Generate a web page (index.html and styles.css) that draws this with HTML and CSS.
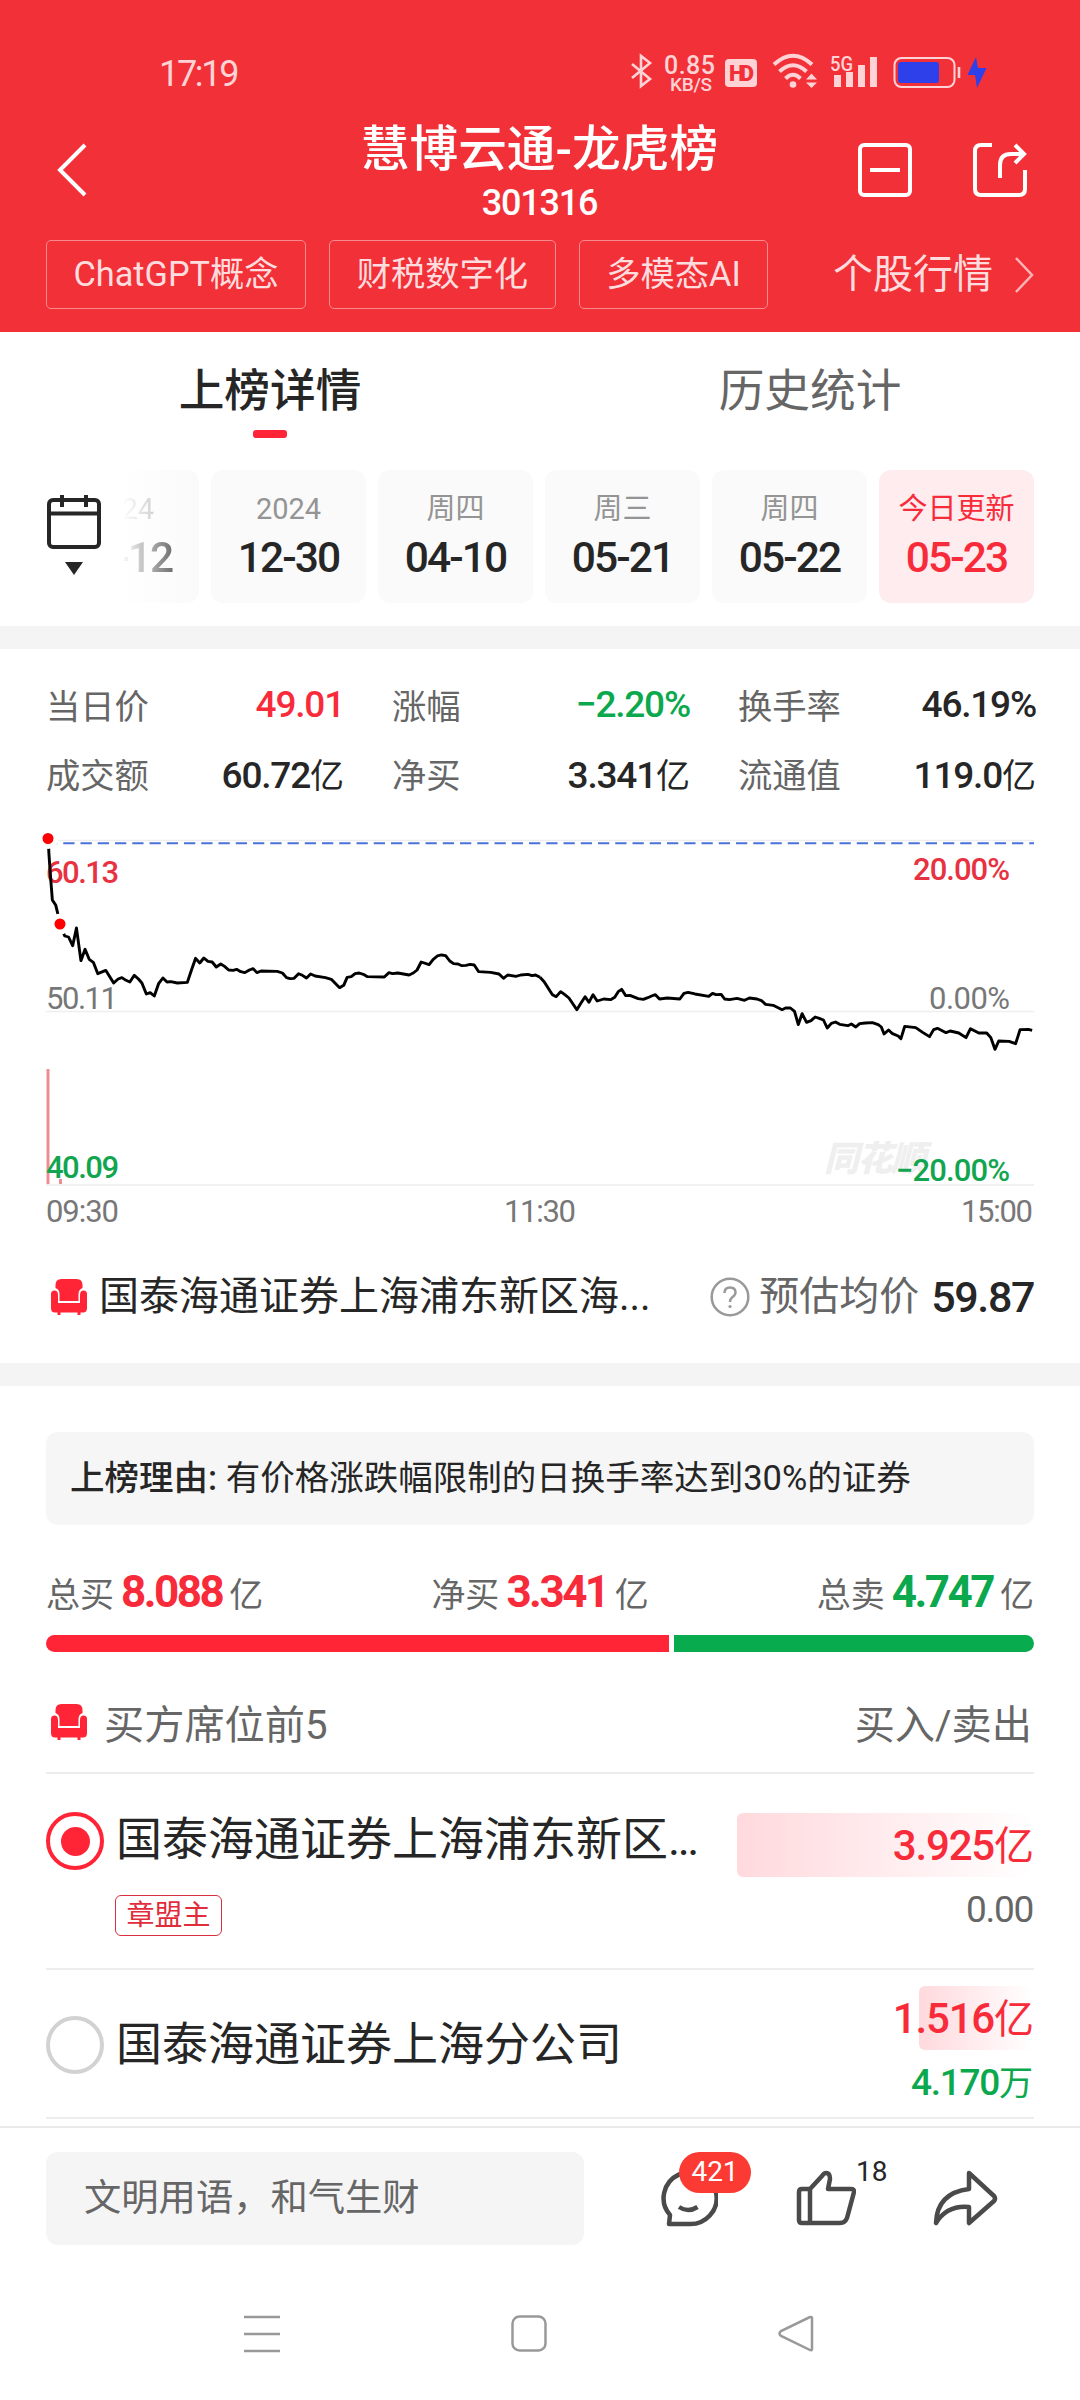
FILE: index.html
```
<!DOCTYPE html>
<html lang="zh-CN">
<head>
  <meta charset="UTF-8" />
  <meta name="viewport" content="width=device-width, initial-scale=1.0"/>
  <title>慧博云通-龙虎榜</title>
  <link rel="stylesheet" href="styles.css">
</head>
<body>
  <svg class="defs" width="0" height="0">
    <symbol id="sofa" viewBox="0 0 36 36">
      <path d="M4.500 9V6Q4.500 0 10.500 0H25.500Q31.500 0 31.500 6V9Q27.500 10.500 27.500 15V22H8.500V15Q8.500 10.500 4.500 9Z"/>
      <path d="M0 15Q0 11.500 3.500 11.500Q7 11.500 7 16V24H29V16Q29 11.500 32.500 11.500Q36 11.500 36 15V29Q36 33.500 32 33.500H29.500V36H26.500V33.500H9.500V36H6.500V33.500H4Q0 33.500 0 29Z"/>
    </symbol>
  </svg>

  <header class="header">
    <!-- 状态栏 -->
    <div class="status">
      <span class="clock">17:19</span>
      <div class="status-icons">
        <svg class="status-svg" width="360" height="46" viewBox="0 0 360 46">
          <g fill="none" stroke="#ffd3d5" stroke-width="2.600">
            <path d="M2 12L20 27L11 34V4L20 11L2 26"/>
            <rect x="264.500" y="6" width="60" height="29" rx="7" stroke-width="2"/>
            <path d="M329 15V26"/>
          </g>
          <g fill="#ffd3d5">
            <rect x="95" y="7" width="32" height="28" rx="4"/>
            <circle cx="163" cy="32.500" r="3.300"/>
            <path d="M176 27.500L181.500 21.500L187 27.500ZM176 30.500L181.500 36L187 30.500Z"/>
            <rect x="204" y="23" width="7" height="12"/>
            <rect x="216" y="20" width="7" height="15"/>
            <rect x="228" y="13" width="7" height="22"/>
            <rect x="240" y="5" width="7" height="30"/>
          </g>
          <g fill="none" stroke="#ffd3d5" stroke-width="4">
            <path d="M144 12.500Q163 -5 182 12.500"/>
            <path d="M149.500 19.500Q163 7 176.500 19.500"/>
            <path d="M155.500 26.500Q163 19 170.500 26.500"/>
          </g>
          <rect x="268" y="10" width="41" height="21" rx="3" fill="#2e40ea"/>
          <path d="M346 5L337.500 23H345L347 36L356.500 16H348Z" fill="#2e40ea"/>
          <text class="svg-speed" x="34" y="21.500" textLength="51">0.85</text>
          <text class="svg-unit" x="40" y="38.500" textLength="42">KB/S</text>
          <text class="svg-hd" x="99" y="28.500" textLength="25">HD</text>
          <text class="svg-5g" x="200" y="18.500" textLength="23" lengthAdjust="spacingAndGlyphs">5G</text>
        </svg>
      </div>
    </div>

    <!-- 标题 -->
    <div class="titlebar">
      <svg class="back" width="32" height="56" viewBox="0 0 32 56"><path d="M29 3L4 28L29 53"/></svg>
      <div class="title">
        <h1>慧博云通-龙虎榜</h1>
        <div class="code">301316</div>
      </div>
      <div class="title-actions">
        <svg width="54" height="54" viewBox="0 0 54 54"><rect x="2" y="2" width="50" height="50" rx="4"/><path d="M12 27H42"/></svg>
        <svg width="54" height="54" viewBox="0 0 54 54">
          <path d="M19 2H8Q2 2 2 8V46Q2 52 8 52H46Q52 52 52 46V27"/>
          <path d="M27 35V22Q27 11 38 11H50M42 2L51 11L42 20"/>
        </svg>
      </div>
    </div>

    <div class="tags">
      <span class="tag">ChatGPT概念</span>
      <span class="tag">财税数字化</span>
      <span class="tag">多模态AI</span>
      <a class="quote">个股行情<svg width="20" height="36" viewBox="0 0 20 36"><path d="M2 1L18 18L2 35"/></svg></a>
    </div>
  </header>

  <!-- 日期选择 -->
  <section class="days">
    <nav class="tabs">
      <div class="tab active">上榜详情</div>
      <div class="tab">历史统计</div>
    </nav>
    <div class="dates">
      <svg class="calendar" width="54" height="82" viewBox="0 0 54 82">
        <rect x="2" y="5" width="50" height="47" rx="4"/>
        <path d="M2 18.500H52M15 0V12M39 0V12"/>
        <path class="solid" d="M18 67H36L27 80Z"/>
      </svg>
      <div class="date-list">
        <div class="date cut"><span>2024</span><b>12-12</b></div>
        <div class="date"><span>2024</span><b>12-30</b></div>
        <div class="date"><span>周四</span><b>04-10</b></div>
        <div class="date"><span>周三</span><b>05-21</b></div>
        <div class="date"><span>周四</span><b>05-22</b></div>
        <div class="date today"><span>今日更新</span><b>05-23</b></div>
      </div>
    </div>
  </section>

  <!-- 行情数据 -->
  <section class="market">
    <div class="stats">
      <div class="stat"><span>当日价</span><b class="red">49.01</b></div>
      <div class="stat"><span>涨幅</span><b class="green">−2.20%</b></div>
      <div class="stat"><span>换手率</span><b>46.19%</b></div>
      <div class="stat"><span>成交额</span><b>60.72<i>亿</i></b></div>
      <div class="stat"><span>净买</span><b>3.341<i>亿</i></b></div>
      <div class="stat"><span>流通值</span><b>119.0<i>亿</i></b></div>
    </div>

    <svg class="chart" width="1080" height="430" viewBox="0 800 1080 430">
      <path class="grid" d="M46 840.500H1034M46 1011.500H1034M46 1185H1034"/>
      <text class="watermark" x="824" y="1171" textLength="102">同花顺</text>
      <path class="limit" d="M46 843.200H1034"/>
      <rect class="volume" x="46.500" y="1069" width="3" height="115"/>
      <rect class="volume" x="59" y="1179" width="3" height="5"/>
      <g class="axis">
        <text class="up" x="46" y="882.500" textLength="73">60.13</text>
        <text x="46" y="1008.500" textLength="72">50.11</text>
        <text class="down" x="46" y="1177.500" textLength="73">40.09</text>
        <text class="up" x="913" y="879.500" textLength="97">20.00%</text>
        <text x="929" y="1008.500" textLength="81">0.00%</text>
        <text class="down" x="896" y="1180.500" textLength="114">−20.00%</text>
        <text x="46" y="1221.500" textLength="73">09:30</text>
        <text x="504" y="1221.500" textLength="72">11:30</text>
        <text x="961" y="1221.500" textLength="72">15:00</text>
      </g>
      <!-- 分时线：上午 / 下午 -->
      <polyline class="price" transform="translate(0 800) scale(.34439 .33333)" points="140,116 142,160 146,220 152,300 162,316 169,346 175,372 184,398 188,408 199,411 211,437 222,384 235,482 247,448 259,478 271,487 284,521 307,511 330,549 343,537 354,533 366,541 377,546 390,526 402,537 412,549 425,582 436,578 448,588 461,550 473,534 485,546 496,545 515,549 544,547 555,513 568,475 580,489 592,474 604,484 616,486 628,501 641,492 652,499 664,510 677,511 687,508 699,515 711,518 724,510 735,506 746,518 758,513 805,514 820,519 832,533 842,536 854,535 867,521 878,526 890,534 902,522 915,528 945,533 962,538 986,563 998,556 1008,532 1020,530 1031,521 1043,519 1055,523 1067,530 1116,531 1129,518 1140,521 1155,519 1188,525 1200,519 1211,510 1223,486 1246,494 1258,478 1270,468 1282,465 1294,467 1306,483 1317,491 1330,492 1341,497 1353,496 1365,493 1377,495 1390,515 1425,517 1449,522 1462,535 1474,525 1498,529 1512,525 1533,523 1545,527 1555,525 1568,532"/>
      <polyline class="price" transform="translate(-17.900 800) scale(.34439 .33333)" points="1620,532 1632,545 1656,584 1667,590 1680,575 1691,583 1704,594 1727,629 1739,609 1751,590 1762,607 1774,584 1786,603 1805,597 1825,599 1837,592 1848,574 1857,568 1869,587 1881,586 1905,596 1920,598 1933,593 1944,588 1955,584 1967,597 1990,594 2026,597 2038,580 2050,577 2070,582 2110,589 2121,580 2131,584 2146,583 2156,597 2170,599 2192,595 2214,601 2228,594 2250,597 2263,602 2275,613 2297,616 2323,629 2333,624 2347,624 2359,634 2370,674 2381,641 2394,667 2407,662 2419,651 2431,655 2443,660 2454,684 2466,670 2478,666 2490,673 2514,677 2524,672 2537,681 2548,671 2565,669 2585,668 2602,674 2611,681 2619,702 2632,690 2642,700 2660,708 2668,716 2679,679 2711,683 2731,697 2751,710 2763,689 2774,685 2799,698 2811,693 2836,699 2857,713 2870,686 2894,699 2917,699 2929,713 2941,748 2952,723 2982,724 3001,731 3014,689 3038,688 3049,691"/>
      <circle class="dot" cx="48" cy="838.500" r="8"/>
      <circle class="dot" cx="60" cy="924" r="8"/>
    </svg>

    <div class="seat">
      <svg class="sofa"><use href="#sofa"/></svg>
      <span class="seat-name">国泰海通证券上海浦东新区海...</span>
      <svg class="help" width="40" height="40" viewBox="0 0 40 40"><circle cx="20" cy="20" r="18.300"/><path d="M14.500 16Q14.500 10.500 20 10.500Q25.500 10.500 25.500 15.500Q25.500 18 22 20.500Q20 22 20 25"/><circle class="point" cx="20" cy="29.500" r="1.600"/></svg>
      <span class="seat-label">预估均价</span>
      <b>59.87</b>
    </div>
  </section>

  <!-- 上榜席位 -->
  <section class="detail">
    <div class="reason"><b>上榜理由:</b> 有价格涨跌幅限制的日换手率达到30%的证券</div>
    <div class="totals">
      <div>总买<b class="red">8.088</b>亿</div>
      <div>净买<b class="red">3.341</b>亿</div>
      <div>总卖<b class="green">4.747</b>亿</div>
    </div>
    <div class="ratio"><div class="buy"></div><div class="sell"></div></div>

    <div class="list-head">
      <svg class="sofa"><use href="#sofa"/></svg>
      <span>买方席位前5</span>
      <span class="right">买入/卖出</span>
    </div>

    <div class="row row-first">
      <div class="radio checked"></div>
      <div class="info">
        <div class="name">国泰海通证券上海浦东新区<span class="dots">...</span></div>
        <span class="badge">章盟主</span>
      </div>
      <div class="amount">
        <div class="in"><div class="bar" style="width: 297px"></div><b>3.925<i>亿</i></b></div>
        <div class="out">0.00</div>
      </div>
    </div>
    <div class="row row-second">
      <div class="radio"></div>
      <div class="info"><div class="name">国泰海通证券上海分公司</div></div>
      <div class="amount">
        <div class="in"><div class="bar" style="width: 115px"></div><b>1.516<i>亿</i></b></div>
        <div class="out green">4.170<i>万</i></div>
      </div>
    </div>
  </section>

  <!-- 底部评论栏 -->
  <footer class="footer">
    <div class="comment">文明用语，和气生财</div>
    <div class="action">
      <svg width="58" height="58" viewBox="0 0 58 58"><path d="M10 46A26.500 26 0 1 1 28 55H9Z"/><path d="M19 38Q28 44 37.500 38" stroke-width="4.500"/></svg>
      <span class="count-red">421</span>
    </div>
    <div class="action">
      <svg width="60" height="58" viewBox="0 0 60 58"><path d="M14 20H6Q3 20 3 23V51Q3 54 6 54H44Q49 54 51 49L58 23Q58.500 20 55 20H32L34 10Q34 4 30 4Q28 4 26 7L14 20V54"/></svg>
      <span class="count">18</span>
    </div>
    <div class="action">
      <svg width="66" height="58" viewBox="0 0 66 58"><path d="M37 4L62 27Q64 29.500 62 32L37 54V38Q15 36 4 54Q5 24 37 20Z"/></svg>
    </div>
  </footer>

  <div class="navbar">
    <svg width="36" height="38" viewBox="0 0 36 38"><path d="M0 2H36M0 19H36M0 36H36"/></svg>
    <svg width="36" height="38" viewBox="0 0 36 38"><rect x="1.500" y="1.500" width="33" height="34" rx="7"/></svg>
    <svg width="36" height="38" viewBox="0 0 36 38"><path d="M34 3V34Q34 36 32 35L3 21Q0 18.500 3 16L32 2Q34 1.500 34 3Z"/></svg>
  </div>
</body>
</html>
```
FILE: styles.css
```
* {
  box-sizing: border-box;
}
body {
  margin: 0;
  width: 1080px;
  height: 2400px;
  overflow: hidden;
  background: #fff;
  color: #262626;
  font-family: Roboto, "Noto Sans CJK SC", sans-serif;
}
b {
  font-weight: 500;
}
i {
  font-style: normal;
  font-weight: 400;
  font-size: 34px;
  letter-spacing: 0;
}
svg {
  display: block;
  flex-shrink: 0;
}
.defs {
  display: none;
}
.red {
  color: #f82b3b;
}
.green {
  color: #0ba84e;
}

/* header */
.header {
  height: 332px;
  padding-top: 50px;
  background: #f23038;
  color: #fff;
}
.status {
  display: flex;
  height: 46px;
  padding: 0 90px 0 159px;
  justify-content: space-between;
}
.clock {
  color: #ffd3d5;
  font-size: 36px;
  line-height: 48px;
  letter-spacing: -2.300px;
}
.status-svg {
  margin: 2px 0 0;
  fill: none;
}
.svg-speed, .svg-unit, .svg-5g {
  fill: #ffd3d5;
  font-size: 25px;
  font-weight: 500;
}
.svg-unit {
  font-size: 19px;
}
.svg-5g {
  font-size: 21px;
}
.svg-hd {
  fill: #f23038;
  font-size: 22px;
  font-weight: 900;
}
.titlebar {
  display: flex;
  height: 136px;
  padding: 24px 53px 0 56px;
  justify-content: space-between;
}
.titlebar svg, .quote svg {
  fill: none;
  stroke: #fff;
  stroke-width: 4;
}
.back {
  margin: 22px 78px 0 0;
}
.title {
  text-align: center;
}
.title h1 {
  margin: 0;
  font-size: 48.700px;
  line-height: 60px;
  font-weight: 500;
}
.code {
  font-size: 36px;
  line-height: 46px;
  font-weight: 500;
  letter-spacing: -1.200px;
}
.title-actions {
  display: flex;
  gap: 61px;
  margin: 23px 0 0 -55px;
}
.tags {
  display: flex;
  align-items: center;
  gap: 23px;
  padding: 8px 46px 0;
}
.tag {
  height: 69px;
  padding: 0 26.500px;
  border: 1px solid #fa8a90;
  border-radius: 5px;
  color: #ffdcde;
  font-size: 34.300px;
  line-height: 66px;
  white-space: nowrap;
}
.quote {
  display: flex;
  align-items: center;
  gap: 21px;
  margin-left: auto;
  color: #ffdcde;
  font-size: 40px;
  line-height: 60px;
}
.quote svg {
  stroke: #ffb4b8;
  stroke-width: 2.500;
}

/* tabs and dates */
.days {
  height: 294px;
}
.tabs {
  display: flex;
  height: 138px;
}
.tab {
  flex: 1;
  padding-top: 26px;
  font-size: 45.700px;
  line-height: 68px;
  text-align: center;
  color: #666;
}
.tab.active {
  color: #262626;
  font-weight: 500;
}
.tab.active::after {
  content: "";
  display: block;
  width: 34px;
  height: 8px;
  margin: 4px auto 0;
  border-radius: 3px;
  background: #ff2436;
}
.dates {
  display: flex;
  padding: 0 46px;
}
.calendar {
  margin: 25px 23px 0 1px;
  fill: none;
  stroke: #262626;
  stroke-width: 4;
}
.calendar .solid {
  fill: #262626;
  stroke: none;
}
.date-list {
  display: flex;
  flex: 1;
  justify-content: flex-end;
  gap: 12px;
  overflow: hidden;
}
.date {
  flex: 0 0 155px;
  height: 133px;
  padding-top: 19px;
  border-radius: 12px;
  background: #fafafa;
  text-align: center;
}
.date span, .date b {
  display: block;
}
.date span {
  color: #949494;
  font-size: 29px;
  line-height: 40px;
}
.date b {
  font-size: 42.500px;
  line-height: 57px;
  letter-spacing: -1.900px;
}
.date.cut {
  -webkit-mask-image: linear-gradient(to right, transparent 50%, #000 100%);
  mask-image: linear-gradient(to right, transparent 50%, #000 100%);
}
.date.today {
  background: #ffecee;
}
.date.today span, .date.today b {
  color: #f82b3b;
}

/* market */
.market {
  height: 737px;
  border-top: 23px solid #f4f4f4;
}
.stats {
  display: grid;
  grid-template-columns: repeat(3, 298px);
  grid-auto-rows: 69px;
  column-gap: 48px;
  padding: 21px 46px 0;
}
.stat {
  display: flex;
  justify-content: space-between;
  align-items: center;
}
.stat span {
  padding-bottom: 2px;
  color: #666;
  font-size: 34.300px;
}
.stat b {
  font-size: 37px;
  letter-spacing: -1.200px;
}
.chart {
  margin-top: -8px;
}
.grid {
  stroke: #eee;
  stroke-width: 1.500;
}
.limit {
  stroke: #4a72d8;
  stroke-width: 2;
  stroke-dasharray: 11.300 5.950;
}
.volume {
  fill: #ee8d96;
}
.watermark {
  fill: #efefef;
  font-size: 35px;
  font-weight: 900;
  font-style: italic;
}
.axis {
  fill: #777;
  font-size: 31px;
}
.axis .up {
  fill: #e83242;
  font-weight: 500;
}
.axis .down {
  fill: #12a550;
  font-weight: 500;
}
.price {
  fill: none;
  stroke: #000;
  stroke-width: 8.500;
  stroke-linejoin: round;
}
.dot {
  fill: #f00;
  stroke: #fff;
  stroke-width: 5;
}
.seat {
  display: flex;
  align-items: center;
  height: 80px;
  margin-top: 27px;
  padding: 0 46px 0 51px;
  font-size: 40px;
  line-height: 60px;
}
.sofa {
  width: 36px;
  height: 36px;
  fill: #ff2436;
}
.seat-name {
  margin-left: 12px;
}
.help {
  margin-left: auto;
  fill: none;
  stroke: #999;
  stroke-width: 2.500;
}
.help .point {
  fill: #999;
  stroke: none;
}
.seat-label {
  margin: 0 12px 0 9px;
  color: #666;
}
.seat b {
  font-size: 43px;
  letter-spacing: -1.400px;
}

/* detail */
.detail {
  height: 763px;
  padding: 46px 46px 0;
  border-top: 23px solid #f4f4f4;
}
.reason {
  height: 93px;
  padding-left: 24px;
  border-radius: 12px;
  background: #f6f6f6;
  font-size: 34.500px;
  line-height: 92px;
  white-space: nowrap;
}
.totals {
  display: flex;
  justify-content: space-between;
  height: 110px;
  color: #666;
  font-size: 34px;
  line-height: 135px;
}
.totals b {
  margin: 0 7px;
  font-size: 44px;
  font-weight: 700;
  letter-spacing: -2.500px;
}
.ratio {
  display: flex;
  gap: 5px;
  height: 17px;
  border-radius: 9px;
  overflow: hidden;
}
.ratio .buy {
  flex: 8088;
  background: #ff2436;
}
.ratio .sell {
  flex: 4670;
  background: #08ab4d;
}
.list-head {
  display: flex;
  align-items: center;
  height: 120px;
  padding: 19px 2px 0 5px;
  color: #666;
  font-size: 40.200px;
}
.list-head span {
  margin-left: 17px;
}
.list-head .right {
  margin-left: auto;
}
.row {
  display: flex;
  border-top: 2px solid #ededed;
}
.row-first {
  height: 196px;
}
.row-second {
  height: 151px;
  border-bottom: 2px solid #ededed;
}
.radio {
  display: flex;
  flex-shrink: 0;
  align-items: center;
  justify-content: center;
  width: 58px;
  height: 58px;
  margin-top: 38px;
  border: 4px solid #d2d2d2;
  border-radius: 50%;
}
.row-second .radio {
  margin-top: 46px;
}
.radio.checked {
  border-color: #ff2436;
}
.radio.checked::after {
  content: "";
  width: 29px;
  height: 29px;
  border-radius: 50%;
  background: #ff2436;
}
.info {
  margin-left: 12px;
  padding-top: 31px;
}
.row-second .info {
  padding-top: 40px;
}
.name {
  font-size: 46px;
  line-height: 68px;
  white-space: nowrap;
}
.dots {
  letter-spacing: -2.500px;
}
.badge {
  display: block;
  width: 107px;
  height: 41px;
  margin: 22px 0 0 -1px;
  border: 1.500px solid #d9303e;
  border-radius: 6px;
  color: #e02c3b;
  font-size: 28px;
  line-height: 40px;
  text-align: center;
}
.amount {
  flex: 1;
  margin-top: 39px;
  text-align: right;
}
.row-second .amount {
  margin-top: 16px;
}
.in {
  display: grid;
  justify-items: end;
  height: 65px;
  line-height: 66px;
}
.in > * {
  grid-area: 1 / 1;
}
.in b {
  color: #f82b3b;
  font-size: 42px;
  letter-spacing: -1.200px;
}
.in i {
  font-size: 40px;
}
.bar {
  height: 64px;
  border-radius: 6px;
  background: linear-gradient(to right, #ffd9dd, #fff);
}
.out {
  padding: 5px 1px 0 0;
  color: #666;
  font-size: 37px;
  line-height: 53px;
  letter-spacing: -1.300px;
}
.out.green {
  color: #0ba84e;
  font-weight: 500;
}

/* footer */
.footer {
  display: flex;
  height: 150px;
  padding: 24px 0 0 46px;
  border-top: 2px solid #e9e9e9;
}
.comment {
  width: 538px;
  height: 93px;
  margin-right: 76px;
  padding-left: 38px;
  border-radius: 12px;
  background: #f5f5f5;
  color: #666;
  font-size: 37.300px;
  line-height: 92px;
}
.action {
  position: relative;
  flex: 0 0 136px;
  padding-top: 17px;
}
.action svg {
  fill: none;
  stroke: #4a4a4a;
  stroke-width: 4.500;
  stroke-linejoin: round;
}
.count-red {
  position: absolute;
  top: 0;
  left: 19px;
  width: 72px;
  height: 41px;
  border-radius: 21px;
  background: #fb3a33;
  color: #fff;
  font-size: 28px;
  line-height: 40px;
  text-align: center;
}
.count {
  position: absolute;
  top: 2px;
  left: 60px;
  font-size: 28px;
  line-height: 36px;
}
.navbar {
  display: flex;
  justify-content: space-between;
  padding: 39px 266px 0 244px;
}
.navbar svg {
  fill: none;
  stroke: #999;
  stroke-width: 2.500;
}
```
